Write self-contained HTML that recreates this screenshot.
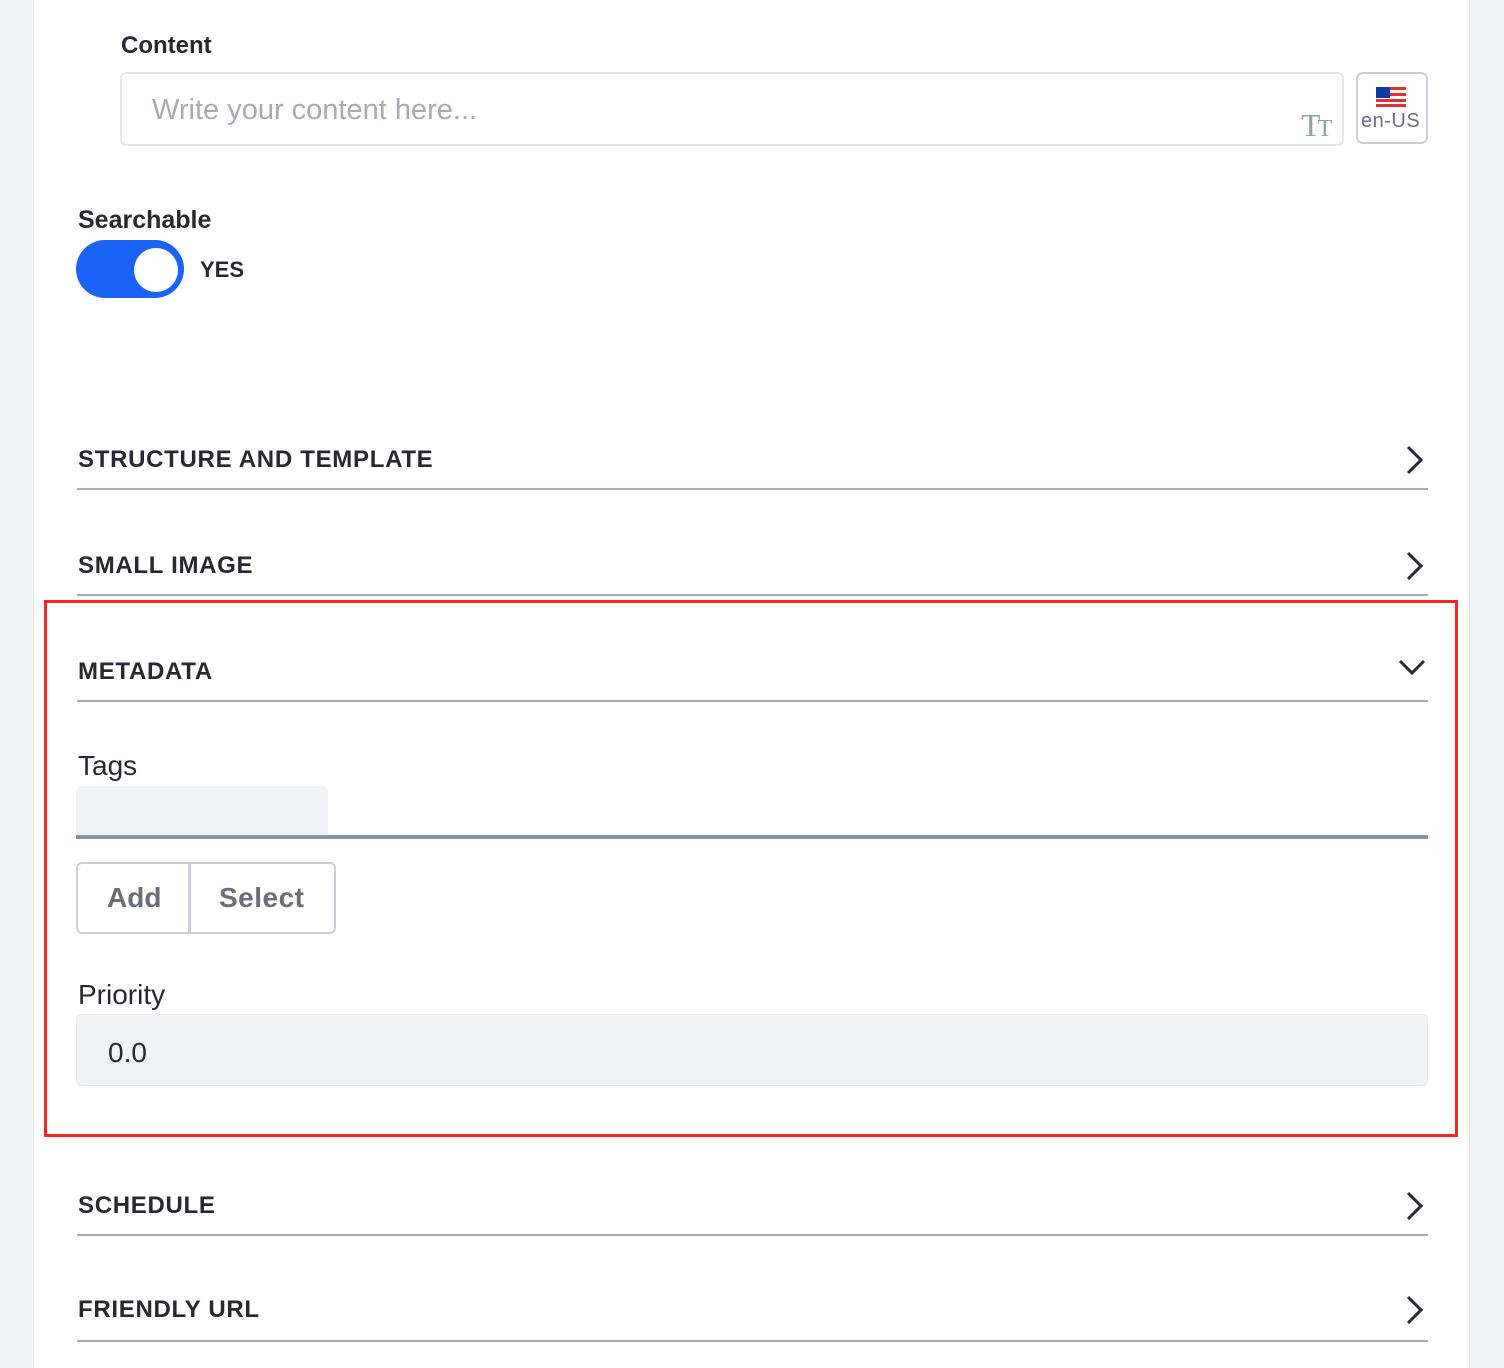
<!DOCTYPE html>
<html><head><meta charset="utf-8"><style>
*{box-sizing:border-box;margin:0;padding:0}
body{width:1504px;height:1368px;background:#f1f2f5;font-family:"Liberation Sans",sans-serif;position:relative;overflow:hidden;color:#272833}
.panel{position:absolute;left:33px;top:0;width:1437px;height:1368px;background:#fff;border-left:1px solid #e7e7ed;border-right:1px solid #e7e7ed}
.abs{position:absolute}
.lbl{font-size:25px;font-weight:bold;color:#272833}
.sec{position:absolute;left:77px;width:1351px;border-bottom:2px solid #a7a9bc}
.sec span{position:absolute;left:1px;font-size:24px;font-weight:bold;letter-spacing:0.7px;color:#272833}
.sec svg{position:absolute;right:3px}
</style></head><body>
<div class="panel"></div>
<div class="abs lbl" style="left:121px;top:32px;font-size:24px">Content</div>
<div class="abs" style="left:120px;top:72px;width:1224px;height:74px;border:2px solid #e7e7ed;border-radius:6px"></div>
<div class="abs" style="left:152px;top:94px;font-size:29px;color:#a7a9bc">Write your content here...</div>
<div class="abs" style="left:1301px;top:107px;font-family:'Liberation Serif',serif;color:#8d9eae;font-size:32px;letter-spacing:-3px">T<span style="font-size:24px">T</span></div>
<div class="abs" style="left:1356px;top:72px;width:72px;height:72px;border:2px solid #cdced9;border-radius:7px"></div>
<svg class="abs" style="left:1376px;top:87px" width="30" height="20"><rect width="30" height="20" fill="#fff"/><g fill="#e03131"><rect y="0" width="30" height="3"/><rect y="6" width="30" height="3"/><rect y="12" width="30" height="3"/><rect y="17" width="30" height="3"/></g><rect width="14" height="11" fill="#0b3aa0"/></svg>
<div class="abs" style="left:1361px;top:110px;font-size:20px;color:#6b6c7e;letter-spacing:0.5px">en-US</div>
<div class="abs lbl" style="left:78px;top:206px;font-size:25px">Searchable</div>
<div class="abs" style="left:76px;top:240px;width:108px;height:58px;border-radius:29px;background:#1b63f7"></div>
<div class="abs" style="left:134px;top:248px;width:44px;height:44px;border-radius:50%;background:#fff"></div>
<div class="abs" style="left:200px;top:257px;font-size:22px;font-weight:bold">YES</div>

<div class="sec" style="top:440px;height:50px"><span style="top:6px">STRUCTURE AND TEMPLATE</span><svg style="top:5px" width="20" height="30"><path d="M3 2 L16 15 L3 28" fill="none" stroke="#272833" stroke-width="3"/></svg></div>
<div class="sec" style="top:546px;height:50px"><span style="top:6px">SMALL IMAGE</span><svg style="top:5px" width="20" height="30"><path d="M3 2 L16 15 L3 28" fill="none" stroke="#272833" stroke-width="3"/></svg></div>
<div class="sec" style="top:652px;height:50px"><span style="top:6px">METADATA</span><svg style="top:5px;right:0" width="30" height="20"><path d="M2 4 L14 16 L26 4" fill="none" stroke="#272833" stroke-width="3"/></svg></div>

<div class="abs" style="left:78px;top:750px;font-size:28px">Tags</div>
<div class="abs" style="left:76px;top:786px;width:252px;height:52px;background:#f1f2f5;border-radius:6px"></div>
<div class="abs" style="left:76px;top:835px;width:1352px;height:4px;background:#8496a6"></div>
<div class="abs" style="left:76px;top:862px;width:260px;height:72px;border:2px solid #cdced9;border-radius:6px"></div>
<div class="abs" style="left:188px;top:863px;width:3px;height:70px;background:#cdced9"></div>
<div class="abs" style="left:107px;top:882px;font-size:28px;font-weight:bold;color:#6b6c7e">Add</div>
<div class="abs" style="left:219px;top:882px;font-size:28px;font-weight:bold;color:#6b6c7e;letter-spacing:0.5px">Select</div>
<div class="abs" style="left:78px;top:979px;font-size:28px">Priority</div>
<div class="abs" style="left:76px;top:1014px;width:1352px;height:72px;background:#f1f2f5;border:1px solid #e7e7ed;border-radius:6px"></div>
<div class="abs" style="left:108px;top:1037px;font-size:28px">0.0</div>

<div class="abs" style="left:44px;top:600px;width:1414px;height:537px;border:3px solid #f5271e"></div>

<div class="sec" style="top:1186px;height:50px"><span style="top:6px">SCHEDULE</span><svg style="top:5px" width="20" height="30"><path d="M3 2 L16 15 L3 28" fill="none" stroke="#272833" stroke-width="3"/></svg></div>
<div class="sec" style="top:1290px;height:52px"><span style="top:6px">FRIENDLY URL</span><svg style="top:5px" width="20" height="30"><path d="M3 2 L16 15 L3 28" fill="none" stroke="#272833" stroke-width="3"/></svg></div>
</body></html>
